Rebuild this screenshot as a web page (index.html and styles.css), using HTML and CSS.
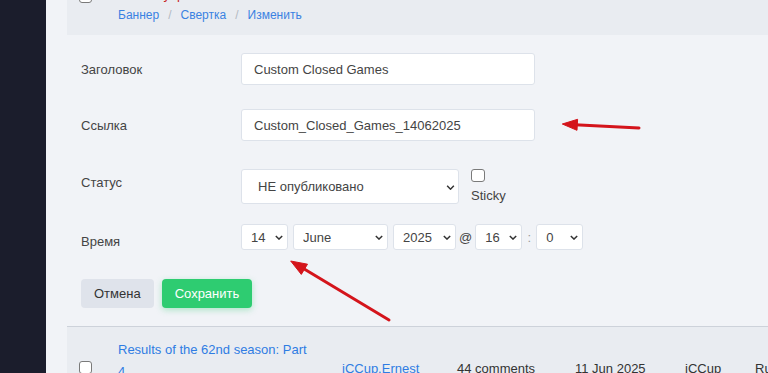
FILE: index.html
```html
<!DOCTYPE html>
<html lang="ru">
<head>
    <meta charset="UTF-8">
    <title>Новости — редактирование</title>
    <link rel="stylesheet" href="styles.css">
</head>
<body>
    <div class="layout">
        <aside class="sidebar"></aside>

        <main class="content">
            <div class="news-row top-row">
                <div class="cell-check"><input type="checkbox" class="check"></div>
                <div class="cell-title">
                    <div class="title"><a href="#" class="link">Games</a> <span class="draft">управляемо</span></div>
                    <div class="actions">
                        <a href="#">Баннер</a><span class="sep">/</span><a href="#">Свертка</a><span class="sep">/</span><a href="#">Изменить</a>
                    </div>
                </div>
            </div>

            <form class="edit-form" id="editForm">
                <div class="field f-title">
                    <label for="title">Заголовок</label>
                    <input type="text" id="title" class="text-input" value="Custom Closed Games">
                </div>

                <div class="field f-link">
                    <label for="slug">Ссылка</label>
                    <input type="text" id="slug" class="text-input" value="Custom_Closed_Games_14062025">
                </div>

                <div class="field f-status">
                    <label for="status">Статус</label>
                    <span class="sel sel-status">
                        <select id="status">
                            <option>НЕ опубликовано</option>
                            <option>Опубликовано</option>
                        </select>
                        <svg class="chev" viewBox="0 0 10 6"><path d="M1 1l4 4 4-4"/></svg>
                    </span>
                    <div class="sticky">
                        <input type="checkbox" id="sticky" class="check">
                        <label for="sticky">Sticky</label>
                    </div>
                </div>

                <div class="field f-time">
                    <label>Время</label>
                    <div class="date-row">
                        <span class="sel sel-sm">
                            <select><option>14</option></select>
                            <svg class="chev" viewBox="0 0 10 6"><path d="M1 1l4 4 4-4"/></svg>
                        </span>
                        <span class="sel sel-month">
                            <select><option>June</option></select>
                            <svg class="chev" viewBox="0 0 10 6"><path d="M1 1l4 4 4-4"/></svg>
                        </span>
                        <span class="sel sel-year">
                            <select><option>2025</option></select>
                            <svg class="chev" viewBox="0 0 10 6"><path d="M1 1l4 4 4-4"/></svg>
                        </span>
                        <span class="at">@</span>
                        <span class="sel sel-sm">
                            <select><option>16</option></select>
                            <svg class="chev" viewBox="0 0 10 6"><path d="M1 1l4 4 4-4"/></svg>
                        </span>
                        <span class="colon">:</span>
                        <span class="sel sel-sm">
                            <select><option>0</option></select>
                            <svg class="chev" viewBox="0 0 10 6"><path d="M1 1l4 4 4-4"/></svg>
                        </span>
                    </div>
                </div>

                <div class="buttons">
                    <button type="button" class="btn btn-cancel">Отмена</button>
                    <button type="submit" class="btn btn-save">Сохранить</button>
                </div>
            </form>

            <div class="news-row bottom-row">
                <div class="cell-check"><input type="checkbox" class="check"></div>
                <div class="cell-title">
                    <a href="#" class="link">Results of the 62nd season: Part 4</a>
                </div>
                <div class="cell cell-author"><a href="#" class="link">iCCup.Ernest</a></div>
                <div class="cell cell-comments">44 comments</div>
                <div class="cell cell-date">11 Jun 2025</div>
                <div class="cell cell-source">iCCup</div>
                <div class="cell cell-lang">Ru</div>
            </div>
        </main>
    </div>

    <svg class="arrows" viewBox="0 0 768 373">
        <line x1="639" y1="128" x2="570" y2="124.4"/>
        <polygon points="562.3,124 577.6,119.3 577,130.3"/>
        <line x1="389" y1="320" x2="298" y2="265.3"/>
        <polygon points="290.7,261 307.5,264.2 301.3,274.4"/>
    </svg>
</body>
</html>
```

FILE: styles.css
```css
body {
    margin: 0;
    font-family: "Liberation Sans", Arial, sans-serif;
    font-size: 13px;
    color: #444;
    background: #f1f3f7;
    overflow: hidden;
}
.layout {
    display: flex;
    height: 373px;
    overflow: hidden;
}
.sidebar {
    width: 46px;
    flex-shrink: 0;
    background: #1b1d2c;
}
.content {
    flex: 1;
    padding-left: 21px;
    overflow: hidden;
}
a {
    text-decoration: none;
}
.link {
    color: #2f7ce3;
}

/* строки списка новостей */
.news-row {
    display: flex;
    background: #e9ecf1;
}
.cell-check {
    width: 51px;
    flex-shrink: 0;
    padding-left: 12px;
    box-sizing: border-box;
}
.check {
    appearance: none;
    margin: 0;
    width: 13px;
    height: 13px;
    border: 1px solid #7a7a7a;
    border-radius: 3px;
    background: #fff;
    display: block;
}
.top-row {
    margin-top: -16px;
    padding-bottom: 11px;
}
.top-row .check {
    margin-top: 6px;
}
.title {
    line-height: 22px;
}
.draft {
    color: #c81e1e;
}
.actions {
    font-size: 12px;
    line-height: 18px;
}
.actions a {
    color: #3a82e2;
}
.sep {
    color: #b3b9c3;
    margin: 0 9px;
}

/* форма */
.edit-form {
    padding: 18px 0 18px 14px;
}
.field {
    display: flex;
    align-items: center;
}
.field > label {
    width: 160px;
    flex-shrink: 0;
    color: #444;
}
.f-title {
    margin-bottom: 24px;
}
.f-link {
    margin-bottom: 28px;
}
.f-status {
    align-items: flex-start;
    margin-bottom: 20px;
}
.f-status > label {
    padding-top: 6px;
}
.f-time {
    align-items: flex-start;
    margin-bottom: 29px;
}
.f-time > label {
    padding-top: 10px;
}
.text-input {
    width: 294px;
    height: 32px;
    box-sizing: border-box;
    border: 1px solid #dde2ea;
    border-radius: 3px;
    padding: 0 12px;
    font-family: inherit;
    font-size: 13px;
    color: #444;
    background: #fff;
}
.sel {
    position: relative;
    display: inline-block;
}
.sel select {
    appearance: none;
    width: 100%;
    box-sizing: border-box;
    border: 1px solid #dde2ea;
    border-radius: 3px;
    background: #fff;
    font-family: inherit;
    font-size: 13px;
    color: #444;
    padding: 0 0 0 9px;
    display: block;
}
.chev {
    position: absolute;
    right: 5px;
    top: 50%;
    width: 8px;
    height: 5px;
    margin-top: -2px;
    fill: none;
    stroke: #333;
    stroke-width: 1.8;
    pointer-events: none;
}
.sel-status {
    width: 218px;
}
.sel-status select {
    height: 35px;
    padding-left: 16px;
}
.sel-status .chev {
    right: 4px;
    width: 9px;
}
.sticky {
    margin-left: 12px;
    line-height: 15px;
}
.sticky .check {
    width: 14px;
    height: 13px;
    margin-bottom: 6px;
}
.date-row {
    display: flex;
    align-items: center;
    gap: 5px;
}
.date-row select {
    height: 26px;
}
.sel-sm {
    width: 47px;
}
.sel-month {
    width: 95px;
}
.sel-year {
    width: 63px;
}
.at {
    margin: 0 -2px;
    color: #444;
}
.colon {
    width: 8px;
    text-align: center;
    margin: 0 -2px;
    color: #999;
}
.buttons {
    display: flex;
    gap: 8px;
}
.btn {
    height: 29px;
    padding: 0 13px;
    border: none;
    border-radius: 4px;
    font-family: inherit;
    font-size: 13px;
    cursor: pointer;
}
.btn-cancel {
    background: #dfe3eb;
    color: #333;
}
.btn-save {
    background: #2ecc71;
    color: #fff;
    box-shadow: 0 2px 6px rgba(46, 204, 113, 0.35);
}

.bottom-row {
    border-top: 1px solid #cdd2da;
    height: 66px;
    line-height: 22px;
}
.bottom-row .check {
    margin-top: 34px;
}
.bottom-row .cell-title {
    width: 224px;
    padding: 12px 26px 0 0;
    box-sizing: border-box;
    flex-shrink: 0;
}
.cell {
    padding-top: 31px;
    flex-shrink: 0;
    color: #333;
}
.cell-author {
    width: 115px;
}
.cell-comments {
    width: 118px;
}
.cell-date {
    width: 110px;
}
.cell-source {
    width: 70px;
}

.arrows {
    position: absolute;
    top: 0;
    left: 0;
    width: 768px;
    height: 373px;
    pointer-events: none;
}
.arrows line {
    stroke: #d4141b;
    stroke-width: 3;
    stroke-linecap: round;
}
.arrows polygon {
    fill: #d4141b;
    stroke: #d4141b;
    stroke-width: 1;
    stroke-linejoin: round;
}
```
